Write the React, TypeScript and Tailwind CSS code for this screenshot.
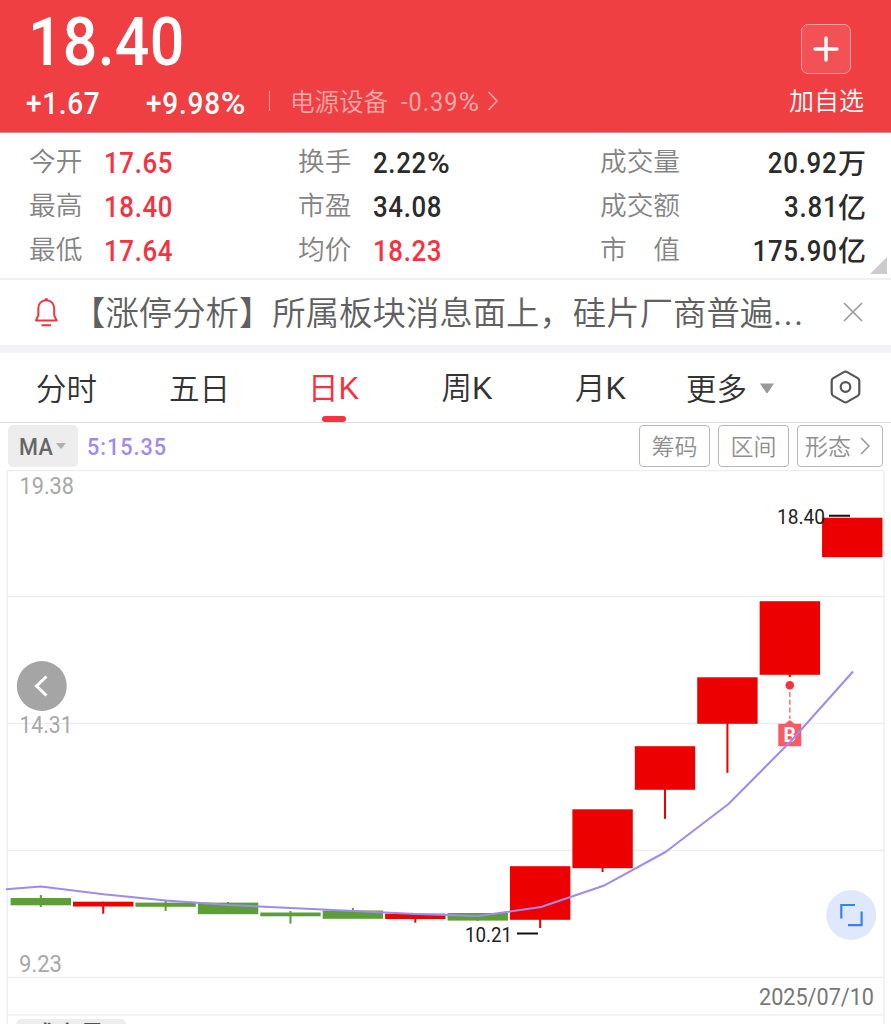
import React from 'react';

interface NumProps {
  text: string;
  className?: string;
}

// condensed figures, close to a DIN face, with a wide percent sign
const Num: React.FC<NumProps> = ({ text, className = '' }) => (
  <span className={`inline-block whitespace-nowrap font-['Roboto','Noto_Sans_CJK_SC',sans-serif] scale-x-90 ${className}`}>
    {text.replace('%', '')}
    {text.endsWith('%') && <span className="inline-block origin-left scale-x-[1.2]">%</span>}
  </span>
);

const QUOTES = [
  [
    { label: '今开', value: '17.65', up: true },
    { label: '最高', value: '18.40', up: true },
    { label: '最低', value: '17.64', up: true },
  ],
  [
    { label: '换手', value: '2.22%', up: false },
    { label: '市盈', value: '34.08', up: false },
    { label: '均价', value: '18.23', up: true },
  ],
];

const TOTALS = [
  { label: '成交量', value: '20.92', unit: '万' },
  { label: '成交额', value: '3.81', unit: '亿' },
  { label: '市　值', value: '175.90', unit: '亿' },
];

const TABS = [
  { name: '分时', width: 'w-[133px]' },
  { name: '五日', width: 'w-[133px]' },
  { name: '日K', width: 'w-[135px]', active: true },
  { name: '周K', width: 'w-[132px]' },
  { name: '月K', width: 'w-[135px]' },
];

// [body top, body bottom, wick top, wick bottom, rising]
const CANDLES: [number, number, number, number, boolean][] = [
  [898, 905.3, 895, 907, false],
  [901.7, 906.5, 901.7, 913.7, true],
  [902.6, 906.8, 900.5, 911, false],
  [902.6, 914.2, 902, 914, false],
  [912.5, 916.3, 911, 923.7, false],
  [910.5, 918.8, 908, 918, false],
  [913.7, 919, 913.7, 922.7, true],
  [913, 920.6, 913, 921, false],
  [866.2, 919.8, 867, 928, true],
  [809.3, 868.2, 810, 872, true],
  [746.2, 789.8, 747, 818.8, true],
  [677.3, 723.8, 678, 772.8, true],
  [601.2, 674.8, 602, 677, true],
  [517.7, 557.2, 518, 557, true],
];

const MA5 = '6,889.3 41,886.5 103.5,894.3 166,900.5 228.5,905 291,908 353.5,911 416,914 478,916 541,907 603.5,885.8 665.5,852 728.5,804 791,741 853,671.5';

const KChart = () => (
  <svg className="block font-normal" width="891" height="554" viewBox="0 470 891 554">
    <g stroke="#ededed" strokeWidth="1.3">
      <path d="M7 470.5H884M7 596.5H884M7 723.5H884M7 850.5H884M7 977.4H884M7 1014.8H884" />
      <path d="M7.2 470V1024M883.9 470V1024" />
    </g>
    {CANDLES.map(([top, bottom, high, low, up], i) => (
      <g key={i} fill={up ? '#ec0000' : '#5c9f38'}>
        <rect x={10.6 + i * 62.42} y={top} width="60.4" height={bottom - top} />
        <rect x={39.8 + i * 62.42} y={high} width="2" height={low - high} />
      </g>
    ))}
    <circle cx="789.8" cy="685.2" r="4.3" fill="#f5323f" />
    <path d="M789.8 692V719" stroke="#f27a83" strokeWidth="1.6" strokeDasharray="5 2.8" />
    <path d="M778.3 723.8H785L789.8 720L794.5 723.8H801.3V746.3H778.3Z" fill="#f75b66" />
    <text x="789.8" y="742.3" textAnchor="middle" fontSize="19.5" fontWeight="700" fill="#fff" fontFamily="Roboto, sans-serif">B</text>
    <polyline points={MA5} fill="none" stroke="#a08af0" strokeWidth="2" strokeLinejoin="round" />
    <path d="M829 515.8H850M517 933.4H538" stroke="#111" strokeWidth="2" />
    <g fontFamily="Roboto, sans-serif" fontSize="20.5" fill="#222">
      <text x="777" y="523.9" textLength="48" lengthAdjust="spacingAndGlyphs">18.40</text>
      <text x="465" y="941.7" textLength="47" lengthAdjust="spacingAndGlyphs">10.21</text>
    </g>
    <g fontFamily="Roboto, sans-serif" fontSize="23.5" fill="#a8a8a8">
      <text x="19.5" y="493.5" textLength="54.5" lengthAdjust="spacingAndGlyphs">19.38</text>
      <text x="19.5" y="732.8" textLength="53" lengthAdjust="spacingAndGlyphs">14.31</text>
      <text x="19" y="971.8" textLength="43" lengthAdjust="spacingAndGlyphs">9.23</text>
    </g>
    <text x="759" y="1005" textLength="115" lengthAdjust="spacingAndGlyphs" fontFamily="Roboto, sans-serif" fontSize="23" fill="#777">2025/07/10</text>
    <circle cx="41.8" cy="686" r="25" fill="#a5a5a5" />
    <path d="M46.5 676.5L36.5 686L46.5 695.5" fill="none" stroke="#fff" strokeWidth="3" />
    <circle cx="851.2" cy="915" r="25" fill="#e0e8fd" />
    <path d="M855 905H841.3V918.5M848 925.2H861.6V911.5" fill="none" stroke="#3a80f0" strokeWidth="2.2" />
  </svg>
);

const ToolButton: React.FC<{ children: React.ReactNode; className: string }> = ({ children, className }) => (
  <button className={`flex h-[42px] items-center justify-center rounded-[4px] border-[1.5px] border-[#b8b8b8] pb-[2px] text-[23px] text-[#909090] ${className}`}>
    {children}
  </button>
);

const App: React.FC = () => {
  return (
    <div className="h-[1024px] w-[891px] overflow-hidden bg-white font-['Noto_Sans_CJK_SC',sans-serif] font-[350] leading-none">
      {/* Price header */}
      <header className="flex h-[133px] justify-between border-b border-[#d98a8a] bg-[#f03f42] text-white">
        <div>
          <div className="h-[81px] pl-[28px] pt-[7px]">
            <Num text="18.40" className="origin-left text-[67.5px] font-medium leading-[70px] tracking-[0.005em]" />
          </div>
          <div className="flex h-[44px] items-center">
            <Num text="+1.67" className="ml-[26px] w-[120px] origin-left text-[31px] font-medium tracking-[0.025em]" />
            <Num text="+9.98%" className="w-[123px] origin-left text-[31px] font-medium tracking-[0.03em]" />
            <span className="-mt-1 h-[20px] w-px bg-[#f79a9c]" />
            <span className="-mt-1 ml-[20px] w-[111px] text-[24.5px] text-[#f9aaab]">电源设备</span>
            <Num text="-0.39%" className="-mt-0.5 w-[86px] origin-left text-[26px] font-normal tracking-[0.045em] text-[#f9aaab]" />
            <svg className="-mt-1" width="12" height="20" viewBox="0 0 12 20">
              <path d="M1.5 1L10 10L1.5 19" fill="none" stroke="#f9aaab" strokeWidth="1.6" />
            </svg>
          </div>
        </div>
        <div className="mr-[27px] flex flex-col items-center pt-[24px]">
          <button className="flex h-[50px] w-[50px] items-center justify-center rounded-[7px] border border-[#f8a0a2] bg-[#f25255]">
            <svg width="26" height="26" viewBox="0 0 26 26">
              <path d="M13 2V24M2 13H24" stroke="#fff" strokeWidth="3.4" strokeLinecap="round" />
            </svg>
          </button>
          <span className="mt-[13px] text-[25px]">加自选</span>
        </div>
      </header>

      {/* Quote figures */}
      <section className="relative flex h-[147px] border-b-2 border-[#f0f0f0] pt-[8px] text-[26.7px]">
        {QUOTES.map((column, i) => (
          <div key={i} className={i === 0 ? 'w-[268px] pl-[29px]' : 'w-[302px] pl-[30px]'}>
            {column.map((q) => (
              <div key={q.label} className="flex h-[43.7px] items-center">
                <span className="-mt-1 w-[75px] text-[#848484]">{q.label}</span>
                <Num
                  text={q.value}
                  className={`mt-0.5 origin-left text-[28.7px] font-medium tracking-[0.025em] ${q.up ? 'text-[#f5323f]' : 'text-[#2b2b2b]'}`}
                />
              </div>
            ))}
          </div>
        ))}
        <div className="flex-1 pl-[30px] pr-[25px]">
          {TOTALS.map((q) => (
            <div key={q.label} className="flex h-[43.7px] items-center justify-between">
              <span className="-mt-1 text-[#848484]">{q.label}</span>
              <span className="mt-0.5 flex items-center text-[#2b2b2b]">
                <Num text={q.value} className="origin-right text-[28.7px] font-medium tracking-[0.03em]" />
                <span className="-mt-1 text-[28px] font-medium">{q.unit}</span>
              </span>
            </div>
          ))}
        </div>
        <svg className="absolute bottom-[4px] right-[4px]" width="17" height="17" viewBox="0 0 17 17">
          <path d="M17 0V17H0Z" fill="#ccc" />
        </svg>
      </section>

      {/* News banner */}
      <section className="flex h-[65px] items-center">
        <svg className="-mt-0.5 ml-[34px]" width="25" height="30" viewBox="0 0 25 30" fill="none" stroke="#f5323f" strokeWidth="2">
          <path d="M12.2 3.2C7.2 3.2 4.3 7 4.3 12V18.5L2 23.4H22.6L20.2 18.5V12C20.2 7 17.3 3.2 12.2 3.2Z" strokeLinejoin="round" />
          <path d="M10.8 2.2H13.8M7.5 28.2H17" />
        </svg>
        <p className="ml-[13px] w-[747px] whitespace-nowrap text-[33.4px] text-[#606060]">
          【涨停分析】所属板块消息面上，硅片厂商普遍<span className="font-['Roboto'] font-normal tracking-[0.05em]">...</span>
        </p>
        <svg className="-mt-0.5 ml-[24px]" width="20" height="20" viewBox="0 0 20 20">
          <path d="M1 1L19 19M19 1L1 19" stroke="#999" strokeWidth="1.6" />
        </svg>
      </section>
      <div className="h-[8px] bg-[#f1f3f8]" />

      {/* Period tabs */}
      <nav className="flex h-[70px] border-b border-[#dedede] text-[30.5px] text-[#333]">
        {TABS.map((t) => (
          <div key={t.name} className={`relative flex h-full items-center justify-center ${t.width} ${t.active ? 'font-normal text-[#f5323f]' : ''}`}>
            <span>
              {t.name.replace('K', '')}
              {t.name.endsWith('K') && <span className="font-['Liberation_Sans'] text-[31px]">K</span>}
            </span>
            {t.active && <span className="absolute bottom-0 h-[6px] w-[24px] rounded-[3px] bg-[#f5323f]" />}
          </div>
        ))}
        <div className="flex w-[108px] items-center pl-[18px]">
          <span className="whitespace-nowrap">更多</span>
          <svg className="ml-[12px] mt-0.5 shrink-0" width="16" height="11" viewBox="0 0 16 11">
            <path d="M1 0.5H15L9 9.5Q8 10.8 7 9.5Z" fill="#999" />
          </svg>
        </div>
        <svg className="ml-[53px] mt-[17px]" width="33" height="34" viewBox="0 0 33 34" fill="none" stroke="#555" strokeWidth="2.2">
          <path d="M14.8 2.1Q16.5 1.2 18.2 2.1L28.7 8.1Q30.3 9.1 30.3 11V23Q30.3 24.9 28.7 25.9L18.2 31.9Q16.5 32.8 14.8 31.9L4.3 25.9Q2.7 24.9 2.7 23V11Q2.7 9.1 4.3 8.1Z" />
          <circle cx="16.5" cy="17" r="4.8" />
        </svg>
      </nav>

      {/* Indicator toolbar */}
      <div className="flex h-[47px] pl-[8px] pr-[8px] pt-[2px]">
        <button className="flex h-[42px] w-[70px] items-center rounded-[5px] bg-[#ededed] pl-[11px] text-[#666]">
          <Num text="MA" className="mt-0.5 w-[37px] origin-left text-[24px] font-medium tracking-[0.02em]" />
          <svg width="10" height="6" viewBox="0 0 10 6">
            <path d="M0 0H10L6 5Q5 6 4 5Z" fill="#b0b0b0" />
          </svg>
        </button>
        <Num text="5:15.35" className="ml-[9px] origin-left text-[24px] font-medium leading-[44px] tracking-[0.045em] text-[#a08af0]" />
        <div className="ml-auto flex gap-[8px]">
          <ToolButton className="w-[71px]">筹码</ToolButton>
          <ToolButton className="w-[71px]">区间</ToolButton>
          <ToolButton className="w-[86px] pr-[5px]">
            形态
            <svg className="ml-[9px] mt-0.5" width="10" height="18" viewBox="0 0 10 18">
              <path d="M1 1L9 9L1 17" fill="none" stroke="#969696" strokeWidth="1.5" />
            </svg>
          </ToolButton>
        </div>
      </div>

      {/* Candlestick chart */}
      <section className="relative h-[554px] overflow-hidden">
        <KChart />
        <div className="absolute left-[16px] top-[549px] h-[42px] w-[110px] rounded-[5px] bg-[#ededed] pl-[15px] pt-[3px] text-[24.5px] font-medium text-[#555]">
          成交量
        </div>
      </section>
    </div>
  );
};

export default App;
